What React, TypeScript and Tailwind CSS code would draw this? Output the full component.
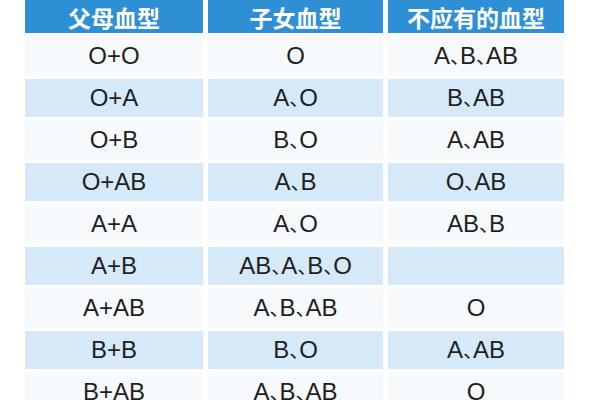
import React from 'react';

const rows: [string, string, string][] = [
  ['O+O', 'O', 'A、B、AB'],
  ['O+A', 'A、O', 'B、AB'],
  ['O+B', 'B、O', 'A、AB'],
  ['O+AB', 'A、B', 'O、AB'],
  ['A+A', 'A、O', 'AB、B'],
  ['A+B', 'AB、A、B、O', ''],
  ['A+AB', 'A、B、AB', 'O'],
  ['B+B', 'B、O', 'A、AB'],
  ['B+AB', 'A、B、AB', 'O'],
];

// the ideographic comma is full width in the CJK font; use the half-width alternate like the print
function Types({ text }: { text: string }) {
  const parts = text.split('、');
  return (
    <span className="whitespace-nowrap">
      {parts.map((p, i) => (
        <React.Fragment key={i}>
          {i > 0 && (
            <span className="[font-family:'Noto_Sans_CJK_SC',sans-serif] [font-feature-settings:'halt'] text-[20px]">
              、
            </span>
          )}
          {p}
        </React.Fragment>
      ))}
    </span>
  );
}

export default function App() {
  return (
    <div className="w-[600px] h-[400px] overflow-hidden bg-white pl-[25px]">
      <div className="grid grid-cols-[178px_175px_176px] gap-x-[5px] gap-y-[4px]">
        {['父母血型', '子女血型', '不应有的血型'].map((h) => (
          <div
            key={h}
            className="h-[33px] bg-[#2f8fd4] text-white font-bold text-[23px] flex items-center justify-center pt-[2px] [font-family:'Noto_Sans_CJK_SC',sans-serif]"
          >
            {h}
          </div>
        ))}
        {rows.map((r, i) =>
          r.map((c, j) => (
            <div
              key={`${i}-${j}`}
              className={`h-[38px] flex items-center justify-center text-[24px] text-[#1f1f1f] leading-none [font-family:'Liberation_Sans','Noto_Sans_CJK_SC',sans-serif] ${
                i % 2 === 1 ? 'bg-[#d5e9f8]' : 'bg-[#f7fafd]'
              }`}
            >
              <Types text={c} />
            </div>
          ))
        )}
      </div>
    </div>
  );
}
